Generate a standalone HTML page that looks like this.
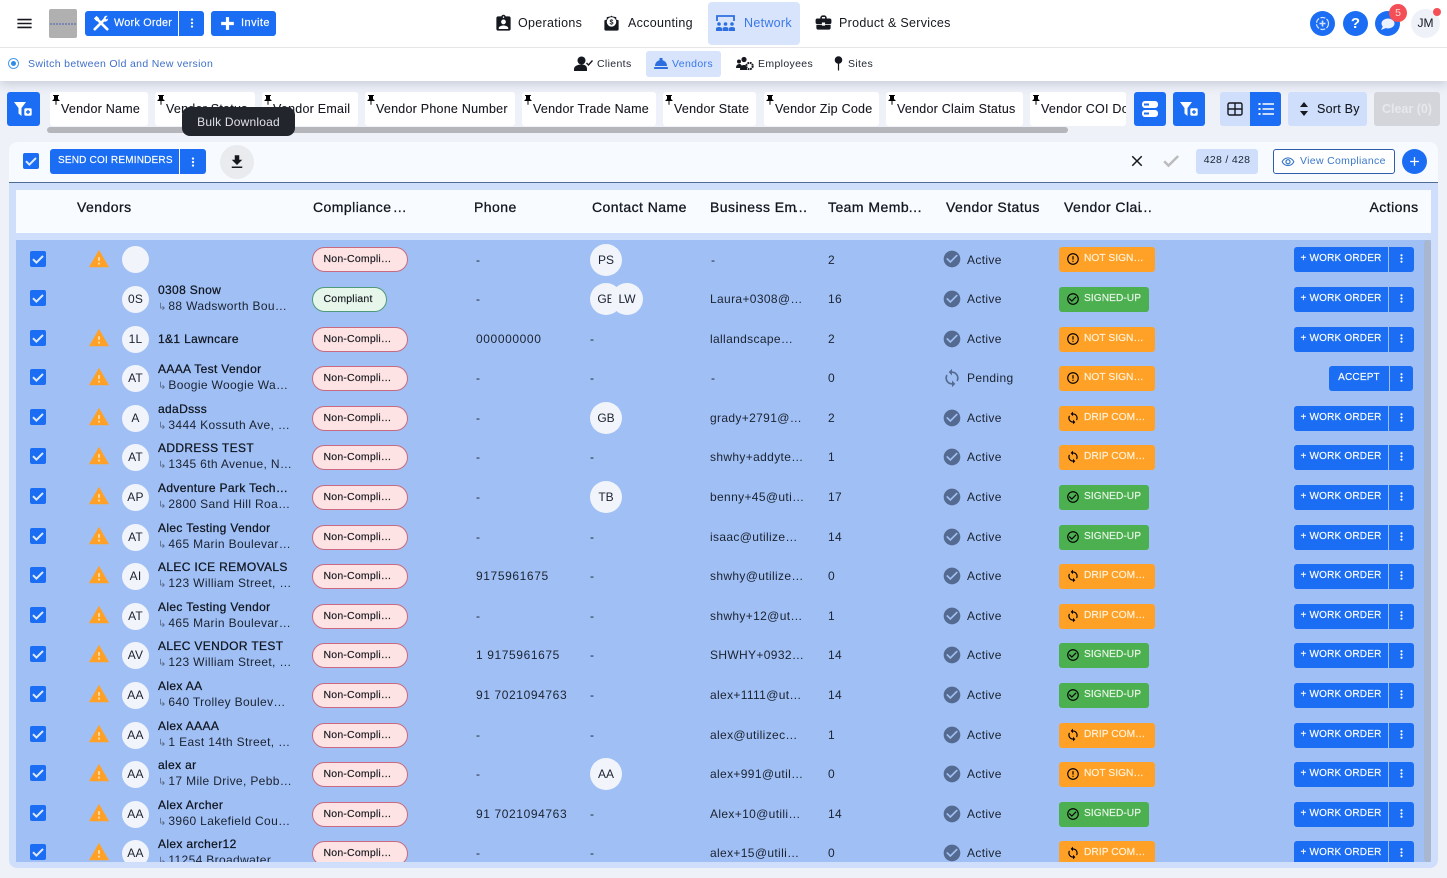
<!DOCTYPE html>
<html><head><meta charset="utf-8"><style>
*{box-sizing:border-box}
html,body{margin:0;padding:0;width:1447px;height:878px;overflow:hidden;background:#eef1f8;font-family:"Liberation Sans",sans-serif;color:#14171f}
.a{position:absolute}
svg{position:absolute;display:block}
.t{position:absolute;white-space:nowrap}
.bl{background:#1b6ef3;color:#fff}
.chip{position:absolute;top:92px;height:34px;background:#fff;border-radius:3px;font-size:12.5px;line-height:34px;white-space:nowrap;letter-spacing:.24px;overflow:hidden;padding-left:11px;-webkit-text-stroke:.1px #14171f}
.chip svg{left:0;top:2px;width:12px;height:12px}
.r{position:absolute;left:0;width:1424px;height:40px;font-size:12px;letter-spacing:.35px;color:#1b2230}
.r .t{top:0;line-height:40px}
.ph{letter-spacing:.6px}
.n{left:158px;top:3px!important;line-height:16px!important;color:#10151f;-webkit-text-stroke:.25px #10151f}
.ad{left:158px;top:19px!important;line-height:16px!important;color:#1b2230}
.ad i{font-style:normal;color:#5a6b88;font-size:10px;margin-right:2px;letter-spacing:0}
.av{position:absolute;left:122px;top:7px;width:27px;height:27px;border-radius:50%;background:#f1f4fb;text-align:center;line-height:27px;font-size:12px;letter-spacing:.2px;color:#1b2230}
.cav{position:absolute;top:4px;width:32px;height:32px;border-radius:50%;background:#f1f4fb;text-align:center;line-height:32px;font-size:12px;color:#1b2230;letter-spacing:0}
.p{position:absolute;left:312px;top:8px;height:25px;width:96px;border:1px solid #c96a80;border-radius:13px;background:#fde3e3;font-size:10.5px;line-height:23px;padding-left:10.5px;white-space:nowrap;color:#14171f;letter-spacing:.2px;-webkit-text-stroke:.15px #14171f}
.p.g{width:75px;border-color:#4f9a78;background:#e6f6ea}
.cl{position:absolute;left:1059px;top:8px;height:25px;width:96px;border-radius:3px;background:#ffa126;color:#fff3dd;font-size:10.2px;line-height:24px;padding-left:25px;white-space:nowrap;letter-spacing:.05px;-webkit-text-stroke:.15px #fff3dd}
.cl.g{background:#4caf50;width:90px;color:#eaf7ea;-webkit-text-stroke:.15px #eaf7ea}
.cl svg{left:7px;top:5px;width:14px;height:14px}
.b1{position:absolute;left:1294px;top:8px;width:94px;height:25px;background:#1b6ef3;border-radius:3px 0 0 3px;color:#fff;font-size:10px;line-height:24px;text-align:center;white-space:nowrap;letter-spacing:.2px;-webkit-text-stroke:.15px #fff}
.b2{position:absolute;left:1389px;top:8px;width:25px;height:25px;background:#1b6ef3;border-radius:0 3px 3px 0}
.b2 svg{left:6px;top:5px;width:13px;height:13px}
.h{position:absolute;top:199px;line-height:16px;font-size:14px;letter-spacing:.45px;white-space:nowrap;color:#14171f;-webkit-text-stroke:.3px #14171f}
.h span{margin-left:-3px;letter-spacing:-1px}
.nav{position:absolute;top:15px;line-height:16px;font-size:12.5px;letter-spacing:.3px;white-space:nowrap;color:#15181f}
.sub{position:absolute;top:57.5px;line-height:13px;font-size:10.5px;letter-spacing:.35px;white-space:nowrap;color:#1f2430}
</style></head><body>
<svg width="0" height="0" style="position:absolute"><defs>
<symbol id="ok" viewBox="0 0 24 24"><path d="M12 2C6.48 2 2 6.48 2 12s4.48 10 10 10 10-4.48 10-10S17.52 2 12 2zm-2 15l-5-5 1.41-1.41L10 14.17l7.59-7.59L19 8l-9 9z"/></symbol>
<symbol id="w" viewBox="0 0 24 24"><path fill="#ffa126" d="M1 21h22L12 2 1 21z"/><path fill="#ffdca6" d="M13 18h-2v-2h2v2zm0-4h-2v-4h2v4z"/></symbol>
<symbol id="sy" viewBox="0 0 24 24"><path d="M12 4V1L8 5l4 4V6c3.31 0 6 2.69 6 6 0 1.01-.25 1.97-.7 2.8l1.46 1.46C19.54 15.03 20 13.57 20 12c0-4.42-3.58-8-8-8zm0 14c-3.31 0-6-2.69-6-6 0-1.01.25-1.97.7-2.8L5.24 7.74C4.46 8.97 4 10.43 4 12c0 4.42 3.58 8 8 8v3l4-4-4-4v3z"/></symbol>
<symbol id="er" viewBox="0 0 24 24"><path d="M11 15h2v2h-2zm0-8h2v6h-2zm.99-5C6.47 2 2 6.48 2 12s4.47 10 9.99 10C17.52 22 22 17.52 22 12S17.52 2 11.99 2zM12 20c-4.42 0-8-3.58-8-8s3.58-8 8-8 8 3.58 8 8-3.58 8-8 8z"/></symbol>
<symbol id="co" viewBox="0 0 24 24"><path d="M16.59 7.58L10 14.17l-3.59-3.58L5 12l5 5 8-8zM12 2C6.48 2 2 6.48 2 12s4.48 10 10 10 10-4.48 10-10S17.52 2 12 2zm0 18c-4.42 0-8-3.58-8-8s3.58-8 8-8 8 3.58 8 8-3.58 8-8 8z"/></symbol>
<symbol id="mv" viewBox="0 0 24 24"><path d="M12 8c1.1 0 2-.9 2-2s-.9-2-2-2-2 .9-2 2 .9 2 2 2zm0 2c-1.1 0-2 .9-2 2s.9 2 2 2 2-.9 2-2-.9-2-2-2zm0 6c-1.1 0-2 .9-2 2s.9 2 2 2 2-.9 2-2-.9-2-2-2z"/></symbol>
<symbol id="cb" viewBox="0 0 18 18"><rect x="1" y="1" width="16" height="16" rx="2" fill="#1b6ef3"/><path d="M4 9.2l3.4 3.4L14 6" fill="none" stroke="#dce9ff" stroke-width="2"/></symbol>
<symbol id="pin" viewBox="0 0 24 24"><path d="M16 9V4h1c.55 0 1-.45 1-1s-.45-1-1-1H7c-.55 0-1 .45-1 1s.45 1 1 1h1v5c0 1.66-1.34 3-3 3v2h5.97v7l1 1 1-1v-7H19v-2c-1.66 0-3-1.34-3-3z"/></symbol>
<symbol id="fl" viewBox="0 0 22 22"><path fill="#fff" d="M1 4h12L8.500 10v8L5.500 15.500V10z"/><rect x="11" y="10" width="8" height="8" rx="1.500" fill="#fff" stroke="#1b6ef3" stroke-width=".6"/><path fill="#1b6ef3" d="M14.300 12h1.400v1.300H17v1.400h-1.300V16h-1.400v-1.300H13v-1.400h1.300z"/></symbol>
</defs></svg>

<!-- top bars -->
<div class="a" style="left:0;top:0;width:1447px;height:81px;background:#fff;box-shadow:0 3px 10px rgba(60,70,100,.22)"></div>
<div class="a" style="left:0;top:47px;width:1447px;height:1px;background:#e6e6e6"></div>
<svg style="left:15px;top:14px" width="19" height="19" viewBox="0 0 24 24"><path d="M3 18h18v-2H3v2zm0-5h18v-2H3v2zm0-7v2h18V6H3z" fill="#16181d"/></svg>
<div class="a" style="left:49px;top:9px;width:28px;height:29px;background:#b0b0b0;border-radius:2px"></div>
<div class="a" style="left:50px;top:23px;width:26px;height:2px;opacity:.55;background:repeating-linear-gradient(90deg,#5068b8 0 2px,transparent 2px 3px)"></div>
<div class="a bl" style="left:85px;top:11px;width:119px;height:25px;border-radius:3px"></div>
<div class="a" style="left:178px;top:11px;width:1px;height:25px;background:#fff"></div>
<svg style="left:93px;top:15px" width="16" height="16" viewBox="0 0 18 18"><path d="M2 16L13 5M16 16L5 5" stroke="#fff" stroke-width="3" stroke-linecap="round"/><path d="M1 4l3-3 3 3-3 3zM12 5a3.500 3.500 0 0 1 4.500-4L14 3.500 15 5l2-1a3.500 3.500 0 0 1-4 3.500z" fill="#fff"/></svg>
<div class="t" style="left:114px;top:15.500px;font-size:10.800px;line-height:15px;color:#fff;letter-spacing:.25px;-webkit-text-stroke:.15px #fff">Work Order</div>
<svg style="left:185px;top:16px;fill:#fff" width="14" height="14"><use href="#mv"/></svg>
<div class="a bl" style="left:211px;top:11px;width:65px;height:25px;border-radius:3px"></div>
<svg style="left:218px;top:14px" width="19" height="19" viewBox="0 0 24 24"><path d="M20 14h-6v6h-4v-6H4v-4h6V4h4v6h6z" fill="#fff"/></svg>
<div class="t" style="left:241px;top:15.500px;font-size:11px;line-height:15px;color:#fff;letter-spacing:.45px;-webkit-text-stroke:.15px #fff">Invite</div>

<svg style="left:494px;top:14px" width="19" height="19" viewBox="0 0 24 24"><path fill="#15181f" d="M19 3h-4.180C14.400 1.840 13.300 1 12 1c-1.300 0-2.400.84-2.820 2H5c-1.100 0-2 .9-2 2v14c0 1.100.9 2 2 2h14c1.100 0 2-.9 2-2V5c0-1.100-.9-2-2-2zm-7 0c.55 0 1 .45 1 1s-.45 1-1 1-1-.45-1-1 .45-1 1-1zm0 4c1.660 0 3 1.340 3 3s-1.340 3-3 3-3-1.340-3-3 1.340-3 3-3zm6 12H6v-1.400c0-2 4-3.100 6-3.100s6 1.100 6 3.100V19z"/></svg>
<div class="nav" style="left:518px">Operations</div>
<svg style="left:602px;top:14px" width="19" height="19" viewBox="0 0 24 24"><path fill="#15181f" d="M3 8l3-1V4l5-1 1-1 1 1 5 1v3l3 1v11a2 2 0 0 1-2 2H5a2 2 0 0 1-2-2z"/><circle cx="12" cy="10" r="6" fill="#fff"/><text x="12" y="13.500" font-size="9" font-weight="700" text-anchor="middle" font-family="Liberation Sans" fill="#15181f">$</text></svg>
<div class="nav" style="left:628px">Accounting</div>
<div class="a" style="left:708px;top:2px;width:92px;height:43px;background:#d7e4fb;border-radius:4px"></div>
<svg style="left:715px;top:14px" width="21" height="19" viewBox="0 0 21 19"><path d="M2 7V2h17v5" fill="none" stroke="#2e6fe0" stroke-width="1.800"/><circle cx="4" cy="10" r="1.800" fill="#2e6fe0"/><circle cx="10.500" cy="10" r="1.800" fill="#2e6fe0"/><circle cx="17" cy="10" r="1.800" fill="#2e6fe0"/><path d="M1 17v-2.500c0-2 6-2 6 0V17zM7.500 17v-2.500c0-2 6-2 6 0V17zM14 17v-2.500c0-2 6-2 6 0V17z" fill="#2e6fe0"/></svg>
<div class="nav" style="left:744px;color:#3a78e8">Network</div>
<svg style="left:814px;top:13px" width="19" height="19" viewBox="0 0 24 24"><path fill="#15181f" d="M10 16v-1H3.010L3 19c0 1.110.89 2 2 2h14c1.110 0 2-.89 2-2v-4h-7v1h-4zm10-9h-4.010V5l-2-2h-4l-2 2v2H4c-1.100 0-2 .9-2 2v3c0 1.110.89 2 2 2h6v-2h4v2h6c1.100 0 2-.9 2-2V9c0-1.100-.9-2-2-2zm-6 0h-4V5h4v2z"/></svg>
<div class="nav" style="left:839px">Product &amp; Services</div>

<!-- top right -->
<div class="a bl" style="left:1310px;top:11px;width:25px;height:25px;border-radius:50%"></div>
<svg style="left:1315px;top:16px" width="15" height="15" viewBox="0 0 15 15"><circle cx="7.500" cy="7.500" r="6" fill="none" stroke="#d5e3fc" stroke-width="1.200" stroke-dasharray="5 1.500"/><path d="M6.700 4.500h1.600v2.200h2.200v1.600H8.300v2.200H6.700V8.300H4.500V6.700h2.200z" fill="#d5e3fc"/></svg>
<div class="a bl" style="left:1343px;top:11px;width:25px;height:25px;border-radius:50%;text-align:center;font-size:15px;font-weight:700;line-height:25px">?</div>
<div class="a bl" style="left:1375px;top:11px;width:25px;height:25px;border-radius:50%"></div>
<svg style="left:1380px;top:18px" width="15" height="13" viewBox="0 0 15 13"><ellipse cx="8" cy="5.500" rx="6.500" ry="5" fill="#eaf1ff"/><path d="M3 8l-2 4 5-2z" fill="#eaf1ff"/></svg>
<div class="a" style="left:1389px;top:4px;width:18px;height:18px;border-radius:50%;background:#f44f57;color:#ffd9d9;font-size:10.500px;line-height:18px;text-align:center">5</div>
<div class="a" style="left:1411px;top:9px;width:29px;height:29px;border-radius:50%;background:#eef1f8;color:#14171f;font-size:12px;line-height:29px;text-align:center">JM</div>
<div class="a" style="left:1433px;top:8px;width:8px;height:8px;border-radius:50%;background:#f44f57"></div>

<!-- second bar -->
<div class="a" style="left:8px;top:58px;width:11px;height:11px;border-radius:50%;border:1px solid #4a9ae8"></div>
<div class="a" style="left:11px;top:61px;width:5px;height:5px;border-radius:50%;background:#2f8be6"></div>
<div class="t" style="left:28px;top:57.500px;font-size:10.500px;line-height:13px;letter-spacing:.33px;color:#3f6fc8">Switch between Old and New version</div>
<svg style="left:574px;top:56px" width="20" height="16" viewBox="0 0 20 16"><circle cx="7.500" cy="4.500" r="4" fill="#15181f"/><path d="M0 15v-2c0-3 4-4.500 7.500-4.500S13 10 13 13v2z" fill="#15181f"/><path d="M12.500 7l2 2 4-4.500" stroke="#15181f" stroke-width="1.400" fill="none"/></svg>
<div class="sub" style="left:597px">Clients</div>
<div class="a" style="left:646px;top:51px;width:75px;height:26px;background:#d7e4fb;border-radius:3px"></div>
<svg style="left:653px;top:57px" width="16" height="13" viewBox="0 0 16 13"><path d="M2 9a6 6 0 0 1 12 0z" fill="#2e6fe0"/><rect x="6.500" y="1" width="3" height="5" fill="#2e6fe0"/><rect x="1" y="10" width="14" height="2" rx=".8" fill="#2e6fe0"/></svg>
<div class="sub" style="left:672px;color:#3a78e8">Vendors</div>
<svg style="left:736px;top:56px" width="18" height="15" viewBox="0 0 18 15"><circle cx="8" cy="3.500" r="2.600" fill="#15181f"/><circle cx="3" cy="5.500" r="2" fill="#15181f"/><path d="M0 12c0-3 2-4 3.500-4S6 9 6 12zM4 14c0-4 2-5 4-5s3 1 3 5z" fill="#15181f"/><circle cx="13.500" cy="10" r="3.200" fill="none" stroke="#15181f" stroke-width="2" stroke-dasharray="1.800 .7"/></svg>
<div class="sub" style="left:758px">Employees</div>
<svg style="left:834px;top:56px" width="9" height="15" viewBox="0 0 9 15"><circle cx="4.500" cy="4" r="3.800" fill="#15181f"/><rect x="3.900" y="6" width="1.200" height="8.500" fill="#15181f"/></svg>
<div class="sub" style="left:848px">Sites</div>

<!-- filter row -->
<div class="a bl" style="left:7px;top:92px;width:33px;height:34px;border-radius:3px"></div>
<svg style="left:13px;top:98px" width="22" height="22"><use href="#fl"/></svg>
<div class="chip" style="left:50px;width:98px"><svg><use href="#pin"/></svg>Vendor Name</div>
<div class="chip" style="left:155px;width:100px"><svg><use href="#pin"/></svg>Vendor Status</div>
<div class="chip" style="left:262px;width:96px"><svg><use href="#pin"/></svg>Vendor Email</div>
<div class="chip" style="left:365px;width:150px"><svg><use href="#pin"/></svg>Vendor Phone Number</div>
<div class="chip" style="left:522px;width:134px"><svg><use href="#pin"/></svg>Vendor Trade Name</div>
<div class="chip" style="left:663px;width:93px"><svg><use href="#pin"/></svg>Vendor State</div>
<div class="chip" style="left:764px;width:115px"><svg><use href="#pin"/></svg>Vendor Zip Code</div>
<div class="chip" style="left:886px;width:137px"><svg><use href="#pin"/></svg>Vendor Claim Status</div>
<div class="chip" style="left:1030px;width:96px"><svg><use href="#pin"/></svg>Vendor COI Do</div>
<div class="a" style="left:47px;top:127px;width:1021px;height:6px;background:#b5b6bb;border-radius:3px"></div>
<div class="a bl" style="left:1134px;top:92px;width:32px;height:34px;border-radius:3px"></div>
<svg style="left:1141px;top:100px" width="18" height="18" viewBox="0 0 18 18"><rect x="1" y="1" width="16" height="7" rx="3" fill="#fff"/><rect x="1" y="10" width="16" height="7" rx="3" fill="#fff"/><rect x="3" y="3.500" width="5" height="2" fill="#1b6ef3"/><rect x="3" y="12.500" width="5" height="2" fill="#1b6ef3"/></svg>
<div class="a bl" style="left:1173px;top:92px;width:32px;height:34px;border-radius:3px"></div>
<svg style="left:1179px;top:98px" width="22" height="22"><use href="#fl"/></svg>
<div class="a" style="left:1220px;top:92px;width:30px;height:34px;background:#cfdffb;border-radius:3px 0 0 3px"></div>
<div class="a bl" style="left:1250px;top:92px;width:31px;height:34px;border-radius:0 3px 3px 0"></div>
<svg style="left:1226px;top:100px" width="18" height="18" viewBox="0 0 18 18"><rect x="2" y="3" width="14" height="12" rx="1.500" fill="none" stroke="#15181f" stroke-width="1.400"/><path d="M2 9h14M9 3v12" stroke="#15181f" stroke-width="1.400"/></svg>
<svg style="left:1257px;top:100px" width="18" height="18" viewBox="0 0 18 18"><path d="M1.500 3h2v2h-2zM1.500 8h2v2h-2zM1.500 13h2v2h-2zM5.500 3.300H17v1.500H5.500zM5.500 8.300H17v1.500H5.500zM5.500 13.300H17v1.500H5.500z" fill="#fff"/></svg>
<div class="a" style="left:1288px;top:92px;width:79px;height:34px;background:#cfdffb;border-radius:3px"></div>
<svg style="left:1299px;top:102px" width="10" height="14" viewBox="0 0 10 14"><path d="M5 0l4 5H1zM5 14l4-5H1z" fill="#15181f"/></svg>
<div class="t" style="left:1317px;top:101px;font-size:12.500px;line-height:16px;letter-spacing:.25px;color:#14171f;-webkit-text-stroke:.1px #14171f">Sort By</div>
<div class="a" style="left:1374px;top:92px;width:66px;height:34px;background:#d3d5da;border-radius:3px;color:#e6e8ec;font-size:12.500px;line-height:34px;text-align:center;font-weight:700">Clear (0)</div>

<!-- table frame -->
<div class="a" style="left:9px;top:142px;width:1429px;height:726px;background:#cfdffb;border-radius:8px"></div>
<div class="a" style="left:9px;top:142px;width:1429px;height:41px;background:#f7fbff;border-bottom:1px solid #4f6a95;border-radius:8px 8px 0 0"></div>
<svg style="left:22px;top:152px" width="18" height="18"><use href="#cb"/></svg>
<div class="a bl" style="left:50px;top:149px;width:156px;height:25px;border-radius:3px;font-size:10px;line-height:24px;padding-left:8px;letter-spacing:.2px;-webkit-text-stroke:.15px #fff;white-space:nowrap">SEND COI REMINDERS</div>
<div class="a" style="left:179px;top:149px;width:1px;height:25px;background:#fff"></div>
<svg style="left:186px;top:155px;fill:#fff" width="14" height="14"><use href="#mv"/></svg>
<div class="a" style="left:220px;top:145px;width:34px;height:34px;border-radius:50%;background:#e9ebee"></div>
<svg style="left:228px;top:153px" width="18" height="18" viewBox="0 0 24 24"><path d="M19 9h-4V3H9v6H5l7 7 7-7zM5 18v2h14v-2H5z" fill="#15181f"/></svg>
<svg style="left:1128px;top:152px" width="18" height="18" viewBox="0 0 24 24"><path d="M19 6.410L17.590 5 12 10.590 6.410 5 5 6.410 10.590 12 5 17.590 6.410 19 12 13.410 17.590 19 19 17.590 13.410 12z" fill="#15181f"/></svg>
<svg style="left:1161px;top:151px" width="20" height="20" viewBox="0 0 24 24"><path d="M9 16.170L4.830 12l-1.420 1.410L9 19 21 7l-1.410-1.410z" fill="#bcbcbc" stroke="#bcbcbc"/></svg>
<div class="a" style="left:1196px;top:149px;width:62px;height:25px;background:#cfdffb;border-radius:3px;font-size:10.500px;line-height:23px;text-align:center;color:#1b2230;letter-spacing:.3px">428 / 428</div>
<div class="a" style="left:1273px;top:149px;width:122px;height:25px;background:#fff;border:1px solid #2e5ea8;border-radius:3px"></div>
<svg style="left:1281px;top:155px" width="14" height="14" viewBox="0 0 24 24"><path fill="#3a78c8" d="M12 6c3.790 0 7.170 2.130 8.820 5.500C19.170 14.870 15.790 17 12 17s-7.170-2.130-8.820-5.500C4.830 8.130 8.210 6 12 6m0-2C7 4 2.730 7.110 1 11.500 2.730 15.890 7 19 12 19s9.270-3.110 11-7.500C21.270 7.110 17 4 12 4zm0 5c1.380 0 2.500 1.120 2.500 2.500S13.380 14 12 14s-2.500-1.120-2.500-2.500S10.620 9 12 9m0-2c-2.480 0-4.500 2.020-4.500 4.500S9.520 16 12 16s4.500-2.020 4.500-4.500S14.480 7 12 7z"/></svg>
<div class="t" style="left:1300px;top:153.500px;font-size:10.500px;line-height:14px;letter-spacing:.32px;color:#3a78c8">View Compliance</div>
<div class="a bl" style="left:1402px;top:149px;width:25px;height:25px;border-radius:50%"></div>
<svg style="left:1407px;top:154px" width="15" height="15" viewBox="0 0 24 24"><path d="M19 13h-6v6h-2v-6H5v-2h6V5h2v6h6v2z" fill="#fff"/></svg>

<!-- header -->
<div class="a" style="left:16px;top:190px;width:1415px;height:43px;background:#f8fbff"></div>
<div class="h" style="left:77px">Vendors</div>
<div class="h" style="left:313px">Compliance <span>…</span></div>
<div class="h" style="left:474px">Phone</div>
<div class="h" style="left:592px">Contact Name</div>
<div class="h" style="left:710px">Business Em<span>…</span></div>
<div class="h" style="left:828px">Team Memb<span style="margin-left:-1px">…</span></div>
<div class="h" style="left:946px">Vendor Status</div>
<div class="h" style="left:1064px">Vendor Clai<span>…</span></div>
<div class="h" style="left:1369.500px">Actions</div>

<!-- rows -->
<div class="a" style="left:16px;top:240px;width:1415px;height:622px;background:#a0c0f5"></div>
<div class="a" style="left:1424px;top:240px;width:7px;height:622px;background:#a9b6cf;border-radius:3px"></div>
<div class="a" style="left:0;top:240px;width:1424px;height:622px;overflow:hidden">

<div class="r" style="top:0px"><svg style="left:29px;top:10px" width="18" height="18"><use href="#cb"/></svg><svg style="left:88px;top:8px" width="22" height="22"><use href="#w"/></svg><div class="av" style="top:6px"></div><div class="p" style="top:7px">Non-Compli…</div><div class="t" style="left:476px">-</div><div class="cav" style="left:590px">PS</div><div class="t" style="left:711px">-</div><div class="t" style="left:828px">2</div><svg style="left:942px;top:9px;fill:#546a90" width="20" height="20"><use href="#ok"/></svg><div class="t" style="left:967px">Active</div><div class="cl" style="top:7px"><svg><use href="#er"/></svg>NOT SIGN…</div><div class="b1" style="top:7px">+ WORK ORDER</div><div class="b2" style="top:7px"><svg style="fill:#fff"><use href="#mv"/></svg></div></div>

<div class="r" style="top:39px"><svg style="left:29px;top:10px" width="18" height="18"><use href="#cb"/></svg><div class="av">0S</div><div class="t n">0308 Snow</div><div class="t ad"><i>↳</i>88 Wadsworth Bou…</div><div class="p g">Compliant</div><div class="t" style="left:476px">-</div><div class="cav" style="left:590px">GE</div><div class="cav" style="left:611px">LW</div><div class="t" style="left:710px">Laura+0308@…</div><div class="t" style="left:828px">16</div><svg style="left:942px;top:10px;fill:#546a90" width="20" height="20"><use href="#ok"/></svg><div class="t" style="left:967px">Active</div><div class="cl g"><svg><use href="#co"/></svg>SIGNED-UP</div><div class="b1">+ WORK ORDER</div><div class="b2"><svg style="fill:#fff"><use href="#mv"/></svg></div></div>

<div class="r" style="top:79px"><svg style="left:29px;top:10px" width="18" height="18"><use href="#cb"/></svg><svg style="left:88px;top:8px" width="22" height="22"><use href="#w"/></svg><div class="av">1L</div><div class="t n" style="top:12px!important">1&amp;1 Lawncare</div><div class="p">Non-Compli…</div><div class="t ph" style="left:476px">000000000</div><div class="t" style="left:590px">-</div><div class="t" style="left:710px">lallandscape…</div><div class="t" style="left:828px">2</div><svg style="left:942px;top:10px;fill:#546a90" width="20" height="20"><use href="#ok"/></svg><div class="t" style="left:967px">Active</div><div class="cl"><svg><use href="#er"/></svg>NOT SIGN…</div><div class="b1">+ WORK ORDER</div><div class="b2"><svg style="fill:#fff"><use href="#mv"/></svg></div></div>

<div class="r" style="top:118px"><svg style="left:29px;top:10px" width="18" height="18"><use href="#cb"/></svg><svg style="left:88px;top:8px" width="22" height="22"><use href="#w"/></svg><div class="av">AT</div><div class="t n">AAAA Test Vendor</div><div class="t ad"><i>↳</i>Boogie Woogie Wa…</div><div class="p">Non-Compli…</div><div class="t" style="left:476px">-</div><div class="t" style="left:590px">-</div><div class="t" style="left:711px">-</div><div class="t" style="left:828px">0</div><svg style="left:942px;top:10px;fill:#546a90" width="20" height="20"><use href="#sy"/></svg><div class="t" style="left:967px">Pending</div><div class="cl"><svg><use href="#er"/></svg>NOT SIGN…</div><div class="b1" style="left:1329px;width:60px">ACCEPT</div><div class="b2" style="left:1390px;width:23px"><svg style="fill:#fff;left:5px"><use href="#mv"/></svg></div></div>

<div class="r" style="top:158px"><svg style="left:29px;top:10px" width="18" height="18"><use href="#cb"/></svg><svg style="left:88px;top:8px" width="22" height="22"><use href="#w"/></svg><div class="av">A</div><div class="t n">adaDsss</div><div class="t ad"><i>↳</i>3444 Kossuth Ave, …</div><div class="p">Non-Compli…</div><div class="t" style="left:476px">-</div><div class="cav" style="left:590px">GB</div><div class="t" style="left:710px">grady+2791@…</div><div class="t" style="left:828px">2</div><svg style="left:942px;top:10px;fill:#546a90" width="20" height="20"><use href="#ok"/></svg><div class="t" style="left:967px">Active</div><div class="cl"><svg><use href="#sy"/></svg>DRIP COM…</div><div class="b1">+ WORK ORDER</div><div class="b2"><svg style="fill:#fff"><use href="#mv"/></svg></div></div>

<div class="r" style="top:197px"><svg style="left:29px;top:10px" width="18" height="18"><use href="#cb"/></svg><svg style="left:88px;top:8px" width="22" height="22"><use href="#w"/></svg><div class="av">AT</div><div class="t n">ADDRESS TEST</div><div class="t ad"><i>↳</i>1345 6th Avenue, N…</div><div class="p">Non-Compli…</div><div class="t" style="left:476px">-</div><div class="t" style="left:590px">-</div><div class="t" style="left:710px">shwhy+addyte…</div><div class="t" style="left:828px">1</div><svg style="left:942px;top:10px;fill:#546a90" width="20" height="20"><use href="#ok"/></svg><div class="t" style="left:967px">Active</div><div class="cl"><svg><use href="#sy"/></svg>DRIP COM…</div><div class="b1">+ WORK ORDER</div><div class="b2"><svg style="fill:#fff"><use href="#mv"/></svg></div></div>

<div class="r" style="top:237px"><svg style="left:29px;top:10px" width="18" height="18"><use href="#cb"/></svg><svg style="left:88px;top:8px" width="22" height="22"><use href="#w"/></svg><div class="av">AP</div><div class="t n">Adventure Park Tech…</div><div class="t ad"><i>↳</i>2800 Sand Hill Roa…</div><div class="p">Non-Compli…</div><div class="t" style="left:476px">-</div><div class="cav" style="left:590px">TB</div><div class="t" style="left:710px">benny+45@uti…</div><div class="t" style="left:828px">17</div><svg style="left:942px;top:10px;fill:#546a90" width="20" height="20"><use href="#ok"/></svg><div class="t" style="left:967px">Active</div><div class="cl g"><svg><use href="#co"/></svg>SIGNED-UP</div><div class="b1">+ WORK ORDER</div><div class="b2"><svg style="fill:#fff"><use href="#mv"/></svg></div></div>

<div class="r" style="top:277px"><svg style="left:29px;top:10px" width="18" height="18"><use href="#cb"/></svg><svg style="left:88px;top:8px" width="22" height="22"><use href="#w"/></svg><div class="av">AT</div><div class="t n">Alec Testing Vendor</div><div class="t ad"><i>↳</i>465 Marin Boulevar…</div><div class="p">Non-Compli…</div><div class="t" style="left:476px">-</div><div class="t" style="left:590px">-</div><div class="t" style="left:710px">isaac@utilize…</div><div class="t" style="left:828px">14</div><svg style="left:942px;top:10px;fill:#546a90" width="20" height="20"><use href="#ok"/></svg><div class="t" style="left:967px">Active</div><div class="cl g"><svg><use href="#co"/></svg>SIGNED-UP</div><div class="b1">+ WORK ORDER</div><div class="b2"><svg style="fill:#fff"><use href="#mv"/></svg></div></div>

<div class="r" style="top:316px"><svg style="left:29px;top:10px" width="18" height="18"><use href="#cb"/></svg><svg style="left:88px;top:8px" width="22" height="22"><use href="#w"/></svg><div class="av">AI</div><div class="t n">ALEC ICE REMOVALS</div><div class="t ad"><i>↳</i>123 William Street, …</div><div class="p">Non-Compli…</div><div class="t ph" style="left:476px">9175961675</div><div class="t" style="left:590px">-</div><div class="t" style="left:710px">shwhy@utilize…</div><div class="t" style="left:828px">0</div><svg style="left:942px;top:10px;fill:#546a90" width="20" height="20"><use href="#ok"/></svg><div class="t" style="left:967px">Active</div><div class="cl"><svg><use href="#sy"/></svg>DRIP COM…</div><div class="b1">+ WORK ORDER</div><div class="b2"><svg style="fill:#fff"><use href="#mv"/></svg></div></div>

<div class="r" style="top:356px"><svg style="left:29px;top:10px" width="18" height="18"><use href="#cb"/></svg><svg style="left:88px;top:8px" width="22" height="22"><use href="#w"/></svg><div class="av">AT</div><div class="t n">Alec Testing Vendor</div><div class="t ad"><i>↳</i>465 Marin Boulevar…</div><div class="p">Non-Compli…</div><div class="t" style="left:476px">-</div><div class="t" style="left:590px">-</div><div class="t" style="left:710px">shwhy+12@ut…</div><div class="t" style="left:828px">1</div><svg style="left:942px;top:10px;fill:#546a90" width="20" height="20"><use href="#ok"/></svg><div class="t" style="left:967px">Active</div><div class="cl"><svg><use href="#sy"/></svg>DRIP COM…</div><div class="b1">+ WORK ORDER</div><div class="b2"><svg style="fill:#fff"><use href="#mv"/></svg></div></div>

<div class="r" style="top:395px"><svg style="left:29px;top:10px" width="18" height="18"><use href="#cb"/></svg><svg style="left:88px;top:8px" width="22" height="22"><use href="#w"/></svg><div class="av">AV</div><div class="t n">ALEC VENDOR TEST</div><div class="t ad"><i>↳</i>123 William Street, …</div><div class="p">Non-Compli…</div><div class="t ph" style="left:476px">1 9175961675</div><div class="t" style="left:590px">-</div><div class="t" style="left:710px">SHWHY+0932…</div><div class="t" style="left:828px">14</div><svg style="left:942px;top:10px;fill:#546a90" width="20" height="20"><use href="#ok"/></svg><div class="t" style="left:967px">Active</div><div class="cl g"><svg><use href="#co"/></svg>SIGNED-UP</div><div class="b1">+ WORK ORDER</div><div class="b2"><svg style="fill:#fff"><use href="#mv"/></svg></div></div>

<div class="r" style="top:435px"><svg style="left:29px;top:10px" width="18" height="18"><use href="#cb"/></svg><svg style="left:88px;top:8px" width="22" height="22"><use href="#w"/></svg><div class="av">AA</div><div class="t n">Alex AA</div><div class="t ad"><i>↳</i>640 Trolley Boulev…</div><div class="p">Non-Compli…</div><div class="t ph" style="left:476px">91 7021094763</div><div class="t" style="left:590px">-</div><div class="t" style="left:710px">alex+1111@ut…</div><div class="t" style="left:828px">14</div><svg style="left:942px;top:10px;fill:#546a90" width="20" height="20"><use href="#ok"/></svg><div class="t" style="left:967px">Active</div><div class="cl g"><svg><use href="#co"/></svg>SIGNED-UP</div><div class="b1">+ WORK ORDER</div><div class="b2"><svg style="fill:#fff"><use href="#mv"/></svg></div></div>

<div class="r" style="top:475px"><svg style="left:29px;top:10px" width="18" height="18"><use href="#cb"/></svg><svg style="left:88px;top:8px" width="22" height="22"><use href="#w"/></svg><div class="av">AA</div><div class="t n">Alex AAAA</div><div class="t ad"><i>↳</i>1 East 14th Street, …</div><div class="p">Non-Compli…</div><div class="t" style="left:476px">-</div><div class="t" style="left:590px">-</div><div class="t" style="left:710px">alex@utilizec…</div><div class="t" style="left:828px">1</div><svg style="left:942px;top:10px;fill:#546a90" width="20" height="20"><use href="#ok"/></svg><div class="t" style="left:967px">Active</div><div class="cl"><svg><use href="#sy"/></svg>DRIP COM…</div><div class="b1">+ WORK ORDER</div><div class="b2"><svg style="fill:#fff"><use href="#mv"/></svg></div></div>

<div class="r" style="top:514px"><svg style="left:29px;top:10px" width="18" height="18"><use href="#cb"/></svg><svg style="left:88px;top:8px" width="22" height="22"><use href="#w"/></svg><div class="av">AA</div><div class="t n">alex ar</div><div class="t ad"><i>↳</i>17 Mile Drive, Pebb…</div><div class="p">Non-Compli…</div><div class="t" style="left:476px">-</div><div class="cav" style="left:590px">AA</div><div class="t" style="left:710px">alex+991@util…</div><div class="t" style="left:828px">0</div><svg style="left:942px;top:10px;fill:#546a90" width="20" height="20"><use href="#ok"/></svg><div class="t" style="left:967px">Active</div><div class="cl"><svg><use href="#er"/></svg>NOT SIGN…</div><div class="b1">+ WORK ORDER</div><div class="b2"><svg style="fill:#fff"><use href="#mv"/></svg></div></div>

<div class="r" style="top:554px"><svg style="left:29px;top:10px" width="18" height="18"><use href="#cb"/></svg><svg style="left:88px;top:8px" width="22" height="22"><use href="#w"/></svg><div class="av">AA</div><div class="t n">Alex Archer</div><div class="t ad"><i>↳</i>3960 Lakefield Cou…</div><div class="p">Non-Compli…</div><div class="t ph" style="left:476px">91 7021094763</div><div class="t" style="left:590px">-</div><div class="t" style="left:710px">Alex+10@utili…</div><div class="t" style="left:828px">14</div><svg style="left:942px;top:10px;fill:#546a90" width="20" height="20"><use href="#ok"/></svg><div class="t" style="left:967px">Active</div><div class="cl g"><svg><use href="#co"/></svg>SIGNED-UP</div><div class="b1">+ WORK ORDER</div><div class="b2"><svg style="fill:#fff"><use href="#mv"/></svg></div></div>

<div class="r" style="top:593px"><svg style="left:29px;top:10px" width="18" height="18"><use href="#cb"/></svg><svg style="left:88px;top:8px" width="22" height="22"><use href="#w"/></svg><div class="av">AA</div><div class="t n">Alex archer12</div><div class="t ad"><i>↳</i>11254 Broadwater</div><div class="p">Non-Compli…</div><div class="t" style="left:476px">-</div><div class="t" style="left:590px">-</div><div class="t" style="left:710px">alex+15@utili…</div><div class="t" style="left:828px">0</div><svg style="left:942px;top:10px;fill:#546a90" width="20" height="20"><use href="#ok"/></svg><div class="t" style="left:967px">Active</div><div class="cl"><svg><use href="#sy"/></svg>DRIP COM…</div><div class="b1">+ WORK ORDER</div><div class="b2"><svg style="fill:#fff"><use href="#mv"/></svg></div></div>

</div>

<!-- tooltip -->
<div class="a" style="left:182px;top:107px;width:113px;height:29px;background:#23252d;border-radius:8px;color:#dfe1e6;font-size:12px;line-height:30px;text-align:center;letter-spacing:.2px">Bulk Download</div>
</body></html>
